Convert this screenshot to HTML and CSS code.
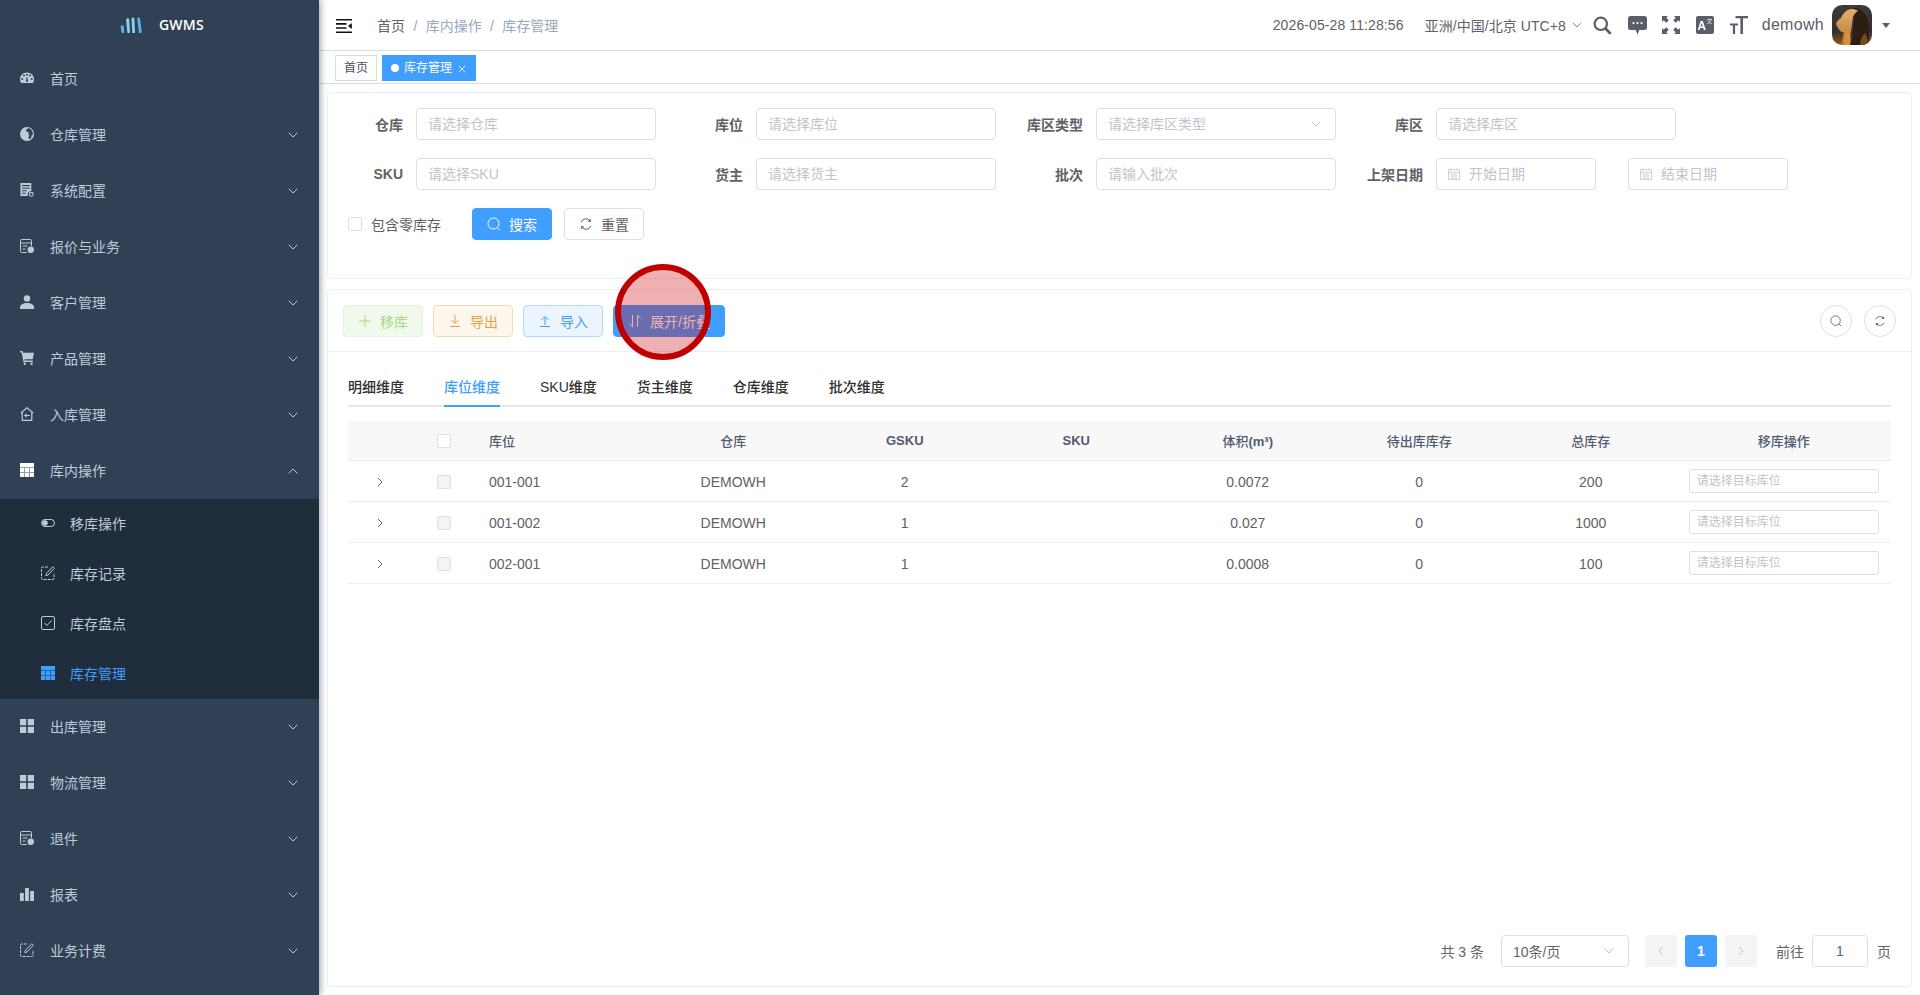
FILE: index.html
```html
<!DOCTYPE html>
<html lang="zh-CN">
  <head>
    <meta charset="UTF-8" />
    <title>库存管理 - GWMS</title>
    <link rel="stylesheet" href="styles.css">
  </head>
  <body>
    <svg class="sprite" xmlns="http://www.w3.org/2000/svg">
      <symbol id="i-chevron" viewBox="0 0 10 6"><path d="M.7.7 5 5l4.300-4.300" fill="none" stroke="currentColor" stroke-width="1"/></symbol>
      <symbol id="i-grid" viewBox="0 0 14 14"><path d="M0 0h6.200v6.200H0zM7.800 0H14v6.200H7.800zM0 7.800h6.200V14H0zM7.800 7.800H14V14H7.800z" fill="currentColor"/></symbol>
      <symbol id="i-table" viewBox="0 0 14 14"><path fill-rule="evenodd" d="M0 0h14v14H0zM0 4.500v.5h14v-.5zM0 9.200v.5h14v-.5zM4.400 5v9h.5V5zM9.100 5v9h.5V5z" fill="currentColor"/></symbol>
      <symbol id="i-doc" viewBox="0 0 14 14"><g fill="none" stroke="currentColor" stroke-width="1"><path d="M7 13.500H1.700A1.200 1.200 0 0 1 .5 12.300V1.700A1.200 1.200 0 0 1 1.700.5h8.600a1.200 1.200 0 0 1 1.200 1.200V7"/><path d="M.5 4h11M2.500 7h5M2.500 10h3"/></g><circle cx="10.800" cy="10.800" r="3.200" fill="currentColor"/></symbol>
      <symbol id="i-edit" viewBox="0 0 14 14"><g fill="none" stroke="currentColor" stroke-width="1"><path d="M7 1H1.500a1 1 0 0 0-1 1v10.500a1 1 0 0 0 1 1H12a1 1 0 0 0 1-1V7" stroke-dasharray="3 1"/><path d="M11.700.8l1.600 1.600-6.300 6.600-2.200.6.600-2.200z"/></g></symbol>
      <symbol id="i-search" viewBox="0 0 14 14"><circle cx="6.500" cy="6.500" r="5.500" fill="none" stroke="currentColor" stroke-width="1"/><path d="M10.500 10.500 13 13" stroke="currentColor" stroke-width="1"/></symbol>
      <symbol id="i-refresh" viewBox="0 0 14 14"><g fill="none" stroke="currentColor" stroke-width="1"><path d="M2.200 5.200A5 5 0 0 1 11.200 4"/><path d="M11.800 8.800A5 5 0 0 1 2.800 10"/></g><path d="M11.800 1.500v3.200H8.600zM2.200 12.500V9.300h3.200z" fill="currentColor"/></symbol>
    </svg>

    <aside class="sidebar">
      <div class="logo">
        <svg class="logo-mark" viewBox="0 0 22 16" xmlns="http://www.w3.org/2000/svg">
          <path d="M.6 9.500C1.200 7.800 3.400 7.700 3.800 9.200L4.200 14.800A1.300 1.300 0 0 1 1.600 15.200z" fill="#58b4e3"/>
          <path d="M6.100 3C6.400.9 8.800.9 9.200 2.600L9.900 14.800A1.300 1.300 0 0 1 7.300 15.100z" fill="#8fd0ef"/>
          <path d="M11.500 1.800C11.700.2 14 .2 14.300 1.700L15 14.800A1.300 1.300 0 0 1 12.300 15.200z" fill="#8fd0ef"/>
          <path d="M17.200 1.700C17.400.2 19.700.2 20 1.700L21.700 14.600A1.400 1.400 0 0 1 18.900 15.200z" fill="#58b4e3"/>
        </svg>
        <span class="logo-title">GWMS</span>
      </div>

      <div class="menu-item">
        <svg class="menu-icon" viewBox="0 0 14 14" xmlns="http://www.w3.org/2000/svg"><path fill-rule="evenodd" d="M7 1.500C3.300 1.500 0 4.300 0 8.200c0 1.600.5 2.900 1.300 3.800h11.400c.8-.9 1.300-2.200 1.300-3.800 0-3.900-3.300-6.700-7-6.700zM2.200 7a1 1 0 1 1 0 2 1 1 0 0 1 0-2zM4 3.600a1 1 0 1 1 0 2 1 1 0 0 1 0-2zM7 2.700a1 1 0 1 1 0 2 1 1 0 0 1 0-2zM10 3.600a1 1 0 1 1 0 2 1 1 0 0 1 0-2zM11.800 7a1 1 0 1 1 0 2 1 1 0 0 1 0-2zM6.600 6.200h.8l.5 3.300a1 1 0 1 1-1.800 0z" fill="currentColor"/></svg>
        <span>首页</span>
      </div>
      <div class="menu-item">
        <svg class="menu-icon" viewBox="0 0 14 14" xmlns="http://www.w3.org/2000/svg"><path fill-rule="evenodd" d="M7 0a7 7 0 1 1 0 14A7 7 0 0 1 7 0zM8.500.9 7.200 2.300 5.800 2.600 6.300 4.400 8 4.700 9 6.800 8.200 7.800 9.500 8.300 8.300 10.500 9.500 12.300 11.200 10.800 11.600 8.500 13 7.500C13 5.500 12 2 8.500.9z" fill="currentColor"/></svg>
        <span>仓库管理</span>
        <svg class="chevron"><use href="#i-chevron"/></svg>
      </div>
      <div class="menu-item">
        <svg class="menu-icon" viewBox="0 0 14 14" xmlns="http://www.w3.org/2000/svg"><path fill-rule="evenodd" d="M.5 0h10.800v8a3.600 3.600 0 0 0-3.400 5H.5zM2 2v1.200h7.800V2zM2 4.700v1h7.800v-1zM2 7.200v1h4.800v-1zM2 9.700v1h3.800v-1z" fill="currentColor"/><circle cx="11.300" cy="11.300" r="1.900" fill="none" stroke="currentColor" stroke-width="1.100"/></svg>
        <span>系统配置</span>
        <svg class="chevron"><use href="#i-chevron"/></svg>
      </div>
      <div class="menu-item">
        <svg class="menu-icon"><use href="#i-doc"/></svg>
        <span>报价与业务</span>
        <svg class="chevron"><use href="#i-chevron"/></svg>
      </div>
      <div class="menu-item">
        <svg class="menu-icon" viewBox="0 0 14 14" xmlns="http://www.w3.org/2000/svg"><circle cx="7" cy="3.400" r="3.200" fill="currentColor"/><path d="M0 12.200C0 9.500 3 7.900 7 7.900s7 1.600 7 4.300V14H0z" fill="currentColor"/></svg>
        <span>客户管理</span>
        <svg class="chevron"><use href="#i-chevron"/></svg>
      </div>
      <div class="menu-item">
        <svg class="menu-icon" viewBox="0 0 14 14" xmlns="http://www.w3.org/2000/svg"><path d="M0 0h2.600l.5 1.800H14l-1.300 6.400H4.500l.3 1.300h8V11H3.500L1.600 1.400H0z" fill="currentColor"/><circle cx="4.800" cy="12.800" r="1.200" fill="currentColor"/><circle cx="11.600" cy="12.800" r="1.200" fill="currentColor"/></svg>
        <span>产品管理</span>
        <svg class="chevron"><use href="#i-chevron"/></svg>
      </div>
      <div class="menu-item">
        <svg class="menu-icon" viewBox="0 0 14 14" xmlns="http://www.w3.org/2000/svg"><path d="M.8 6 7 .9 13.200 6M2.200 5v8.300h9.600V5" fill="none" stroke="currentColor" stroke-width="1.200"/><path d="M10 8H6.500V6.200L4 8.500l2.500 2.300V9H10z" fill="currentColor"/></svg>
        <span>入库管理</span>
        <svg class="chevron"><use href="#i-chevron"/></svg>
      </div>
      <div class="menu-item menu-open">
        <svg class="menu-icon icon-white"><use href="#i-table"/></svg>
        <span>库内操作</span>
        <svg class="chevron chevron-up"><use href="#i-chevron"/></svg>
      </div>

      <div class="submenu">
        <div class="sub-item">
          <svg class="sub-icon" viewBox="0 0 14 14" xmlns="http://www.w3.org/2000/svg"><rect x=".5" y="3.500" width="13" height="7" rx="3.500" fill="none" stroke="currentColor"/><circle cx="4" cy="7" r="2.800" fill="currentColor"/></svg>
          <span>移库操作</span>
        </div>
        <div class="sub-item">
          <svg class="sub-icon"><use href="#i-edit"/></svg>
          <span>库存记录</span>
        </div>
        <div class="sub-item">
          <svg class="sub-icon" viewBox="0 0 14 14" xmlns="http://www.w3.org/2000/svg"><rect x=".5" y=".5" width="13" height="13" rx="1.500" fill="none" stroke="currentColor"/><path d="m3.500 7 2.500 2.500 4.500-5" fill="none" stroke="currentColor"/></svg>
          <span>库存盘点</span>
        </div>
        <div class="sub-item sub-active">
          <svg class="sub-icon"><use href="#i-table"/></svg>
          <span>库存管理</span>
        </div>
      </div>

      <div class="menu-item">
        <svg class="menu-icon"><use href="#i-grid"/></svg>
        <span>出库管理</span>
        <svg class="chevron"><use href="#i-chevron"/></svg>
      </div>
      <div class="menu-item">
        <svg class="menu-icon"><use href="#i-grid"/></svg>
        <span>物流管理</span>
        <svg class="chevron"><use href="#i-chevron"/></svg>
      </div>
      <div class="menu-item">
        <svg class="menu-icon"><use href="#i-doc"/></svg>
        <span>退件</span>
        <svg class="chevron"><use href="#i-chevron"/></svg>
      </div>
      <div class="menu-item">
        <svg class="menu-icon" viewBox="0 0 14 14" xmlns="http://www.w3.org/2000/svg"><path d="M0 6h3.800v8H0zM5.100 1h3.800v13H5.100zM10.200 4H14v10h-3.800z" fill="currentColor"/></svg>
        <span>报表</span>
        <svg class="chevron"><use href="#i-chevron"/></svg>
      </div>
      <div class="menu-item">
        <svg class="menu-icon"><use href="#i-edit"/></svg>
        <span>业务计费</span>
        <svg class="chevron"><use href="#i-chevron"/></svg>
      </div>
    </aside>

    <div class="main">
      <header class="navbar">
        <svg class="hamburger" viewBox="0 0 16 14" xmlns="http://www.w3.org/2000/svg"><path d="M0 0h16v1.600H0zM0 4.100h10.500v1.600H0zM0 8.200h10.500v1.600H0zM0 12.400h16V14H0z" fill="#111"/><path d="M15.800 4v5.900L12 7z" fill="#111"/></svg>
        <nav class="breadcrumb">
          <span class="crumb-home">首页</span>
          <span class="crumb-sep">/</span>
          <span>库内操作</span>
          <span class="crumb-sep">/</span>
          <span>库存管理</span>
        </nav>

        <div class="nav-right">
          <span class="clock">2026-05-28 11:28:56</span>
          <span class="timezone">亚洲/中国/北京 UTC+8</span>
          <svg class="tz-chevron"><use href="#i-chevron"/></svg>
          <svg class="nav-icon icon-search" viewBox="0 0 19 19" xmlns="http://www.w3.org/2000/svg"><circle cx="7.800" cy="7.800" r="6.200" fill="none" stroke="#5a5e66" stroke-width="2.200"/><path d="m12.500 12.500 5.200 5.400" stroke="#5a5e66" stroke-width="2.800"/></svg>
          <svg class="nav-icon icon-chat" viewBox="0 0 19 19" xmlns="http://www.w3.org/2000/svg"><path fill-rule="evenodd" d="M2.500 0h14A2.500 2.500 0 0 1 19 2.500v9a2.500 2.500 0 0 1-2.500 2.500h-5.200l-1.800 4.500-1.800-4.500H2.500A2.500 2.500 0 0 1 0 11.500v-9A2.500 2.500 0 0 1 2.500 0zM5.500 6a1.100 1.100 0 1 0 0 2.200 1.100 1.100 0 0 0 0-2.200zM9.500 6a1.100 1.100 0 1 0 0 2.200 1.100 1.100 0 0 0 0-2.200zM13.500 6a1.100 1.100 0 1 0 0 2.200 1.100 1.100 0 0 0 0-2.200z" fill="#5a5e66"/></svg>
          <svg class="nav-icon icon-full" viewBox="0 0 18 18" xmlns="http://www.w3.org/2000/svg"><path d="M0 0h6L4.300 1.700l2.500 2.500-2.600 2.600-2.500-2.500L0 6zM18 0v6l-1.700-1.700-2.500 2.500-2.600-2.600 2.500-2.500L12 0zM18 18h-6l1.700-1.700-2.500-2.500 2.600-2.600 2.500 2.500L18 12zM0 18v-6l1.700 1.700 2.500-2.500 2.600 2.600-2.500 2.500L6 18z" fill="#5a5e66"/></svg>
          <svg class="nav-icon icon-lang" viewBox="0 0 18 18" xmlns="http://www.w3.org/2000/svg"><rect width="18" height="18" rx="2" fill="#5a5e66"/><path fill-rule="evenodd" d="M4.700 5h2.100l3 9H7.900l-.6-2H4.100l-.6 2H1.700zM5.700 7 4.600 10.500h2.200z" fill="#fff"/><path d="M11 3.500h5M13.500 2.800v.7M15 3.500c-.4 2-1.700 3.400-3.800 4.200M12 4.800c.6 1.300 1.800 2.300 3.800 2.900" fill="none" stroke="#fff" stroke-width=".7"/></svg>
          <svg class="nav-icon icon-size" viewBox="0 0 18 18" xmlns="http://www.w3.org/2000/svg"><path d="M5.500 0H18v2.300h-5V18h-2.600V2.300H5.500zM0 7.500h8v2H5.100V18H2.900V9.500H0z" fill="#5a5e66"/></svg>
          <span class="username">demowh</span>
          <svg class="avatar" viewBox="0 0 40 40" xmlns="http://www.w3.org/2000/svg">
            <defs>
              <clipPath id="avatar-clip"><rect width="40" height="40" rx="10"/></clipPath>
              <linearGradient id="face" x1="0" y1="0" x2="0" y2="1"><stop offset="0" stop-color="#e2b070"/><stop offset="1" stop-color="#b8742f"/></linearGradient>
              <linearGradient id="ground" x1="0" y1="0" x2="0" y2="1"><stop offset="0" stop-color="#3f3a34"/><stop offset=".65" stop-color="#33302b"/><stop offset="1" stop-color="#8a5a20"/></linearGradient>
            </defs>
            <g clip-path="url(#avatar-clip)">
              <rect width="40" height="40" fill="url(#ground)"/>
              <path d="M21 3c8 0 13 5 15 13 2 9 1 17 0 24H18c3-8 3-16 4-22z" fill="#2b1e14"/>
              <path d="M20 4c2 0 4 .5 6 2-2 1-4 3-5 6-1 5-1 10-2 14-1 5-2 9-3 14h-7c1-5 2-9 3-12-3-1-5-3-6-5l-2-4c1-3 3-5 5-6 2-5 6-9 11-9z" fill="url(#face)"/>
              <path d="M15 24c3 2 4 8 3 16h-6c0-6 1-11 3-16z" fill="#d9903c"/>
              <path d="M33 28c2 3 3 7 3 12h-8c0-5 2-9 5-12z" fill="#7a4a1c"/>
            </g>
          </svg>
          <span class="caret"></span>
        </div>
      </header>

      <div class="tags-view">
        <span class="tag">首页</span>
        <span class="tag tag-active"><i class="tag-dot"></i>库存管理<svg class="tag-close" viewBox="0 0 8 8" xmlns="http://www.w3.org/2000/svg"><path d="m.8.8 6.400 6.400M7.200.8.8 7.200" stroke="currentColor" stroke-width=".8"/></svg></span>
      </div>

      <div class="app-main">
        <section class="card filter-card">
          <div class="filter-grid">
            <div class="form-item">
              <label>仓库</label>
              <div class="field"><input placeholder="请选择仓库"></div>
            </div>
            <div class="form-item">
              <label>库位</label>
              <div class="field"><input placeholder="请选择库位"></div>
            </div>
            <div class="form-item">
              <label>库区类型</label>
              <div class="field"><input placeholder="请选择库区类型"><svg class="field-chevron"><use href="#i-chevron"/></svg></div>
            </div>
            <div class="form-item">
              <label>库区</label>
              <div class="field"><input placeholder="请选择库区"></div>
            </div>
            <div class="form-item">
              <label>SKU</label>
              <div class="field"><input placeholder="请选择SKU"></div>
            </div>
            <div class="form-item">
              <label>货主</label>
              <div class="field"><input placeholder="请选择货主"></div>
            </div>
            <div class="form-item">
              <label>批次</label>
              <div class="field"><input placeholder="请输入批次"></div>
            </div>
            <div class="form-item">
              <label>上架日期</label>
              <div class="date-pair">
                <div class="field field-date">
                  <svg class="date-icon" viewBox="0 0 12 12" xmlns="http://www.w3.org/2000/svg"><path d="M.5 1.500h11v10H.5zM.5 4h11M2.500 6h7M2.500 8h7M2.500 10h7M3 .5v1.500M9 .5v1.500" fill="none" stroke="currentColor" stroke-width=".8"/></svg>
                  <input placeholder="开始日期">
                </div>
                <div class="field field-date">
                  <svg class="date-icon" viewBox="0 0 12 12" xmlns="http://www.w3.org/2000/svg"><path d="M.5 1.500h11v10H.5zM.5 4h11M2.500 6h7M2.500 8h7M2.500 10h7M3 .5v1.500M9 .5v1.500" fill="none" stroke="currentColor" stroke-width=".8"/></svg>
                  <input placeholder="结束日期">
                </div>
              </div>
            </div>
          </div>
          <div class="filter-actions">
            <label class="check-label"><span class="checkbox"></span>包含零库存</label>
            <button class="btn btn-primary"><svg class="btn-icon"><use href="#i-search"/></svg>搜索</button>
            <button class="btn btn-default"><svg class="btn-icon"><use href="#i-refresh"/></svg>重置</button>
          </div>
        </section>

        <section class="card table-card">
          <div class="toolbar">
            <button class="btn btn-success-off">
              <svg class="btn-icon" viewBox="0 0 14 14" xmlns="http://www.w3.org/2000/svg"><path d="M7 1v12M1 7h12" stroke="currentColor" stroke-width="1" fill="none"/></svg>移库
            </button>
            <button class="btn btn-warning-plain">
              <svg class="btn-icon" viewBox="0 0 14 14" xmlns="http://www.w3.org/2000/svg"><path d="M7 1v8M3.500 6 7 9.500 10.500 6M2 12.500h10" stroke="currentColor" stroke-width="1" fill="none"/></svg>导出
            </button>
            <button class="btn btn-primary-plain">
              <svg class="btn-icon" viewBox="0 0 14 14" xmlns="http://www.w3.org/2000/svg"><path d="M7 11V3M3.500 6 7 2.500 10.500 6M2 12.500h10" stroke="currentColor" stroke-width="1" fill="none"/></svg>导入
            </button>
            <button class="btn btn-primary btn-wide">
              <svg class="btn-icon" viewBox="0 0 14 14" xmlns="http://www.w3.org/2000/svg"><path d="M4.500 1v12L1.500 9.500M9.500 13V1l3 3.500" stroke="currentColor" stroke-width="1" fill="none"/></svg>展开/折叠
            </button>
            <div class="toolbar-right">
              <button class="btn-circle"><svg class="btn-icon-only"><use href="#i-search"/></svg></button>
              <button class="btn-circle"><svg class="btn-icon-only"><use href="#i-refresh"/></svg></button>
            </div>
          </div>

          <div class="table-body">
            <div class="tabs">
              <span class="tab">明细维度</span>
              <span class="tab tab-active">库位维度</span>
              <span class="tab">SKU维度</span>
              <span class="tab">货主维度</span>
              <span class="tab">仓库维度</span>
              <span class="tab">批次维度</span>
            </div>

            <table class="stock-table">
              <colgroup>
                <col class="col-expand"><col class="col-check"><col class="col-data"><col class="col-data"><col class="col-data"><col class="col-data"><col class="col-data"><col class="col-data"><col class="col-data"><col>
              </colgroup>
              <thead>
                <tr>
                  <th></th>
                  <th><span class="checkbox"></span></th>
                  <th class="left">库位</th>
                  <th>仓库</th>
                  <th><b>GSKU</b></th>
                  <th><b>SKU</b></th>
                  <th>体积<b>(m³)</b></th>
                  <th>待出库库存</th>
                  <th>总库存</th>
                  <th>移库操作</th>
                </tr>
              </thead>
              <tbody>
                <tr>
                  <td><svg class="row-arrow" viewBox="0 0 6 10" xmlns="http://www.w3.org/2000/svg"><path d="m1 1 4 4-4 4" fill="none" stroke="currentColor"/></svg></td>
                  <td><span class="checkbox checkbox-off"></span></td>
                  <td class="left">001-001</td>
                  <td>DEMOWH</td>
                  <td>2</td>
                  <td></td>
                  <td>0.0072</td>
                  <td>0</td>
                  <td>200</td>
                  <td class="cell-input"><input class="row-input" placeholder="请选择目标库位"></td>
                </tr>
                <tr>
                  <td><svg class="row-arrow" viewBox="0 0 6 10" xmlns="http://www.w3.org/2000/svg"><path d="m1 1 4 4-4 4" fill="none" stroke="currentColor"/></svg></td>
                  <td><span class="checkbox checkbox-off"></span></td>
                  <td class="left">001-002</td>
                  <td>DEMOWH</td>
                  <td>1</td>
                  <td></td>
                  <td>0.027</td>
                  <td>0</td>
                  <td>1000</td>
                  <td class="cell-input"><input class="row-input" placeholder="请选择目标库位"></td>
                </tr>
                <tr>
                  <td><svg class="row-arrow" viewBox="0 0 6 10" xmlns="http://www.w3.org/2000/svg"><path d="m1 1 4 4-4 4" fill="none" stroke="currentColor"/></svg></td>
                  <td><span class="checkbox checkbox-off"></span></td>
                  <td class="left">002-001</td>
                  <td>DEMOWH</td>
                  <td>1</td>
                  <td></td>
                  <td>0.0008</td>
                  <td>0</td>
                  <td>100</td>
                  <td class="cell-input"><input class="row-input" placeholder="请选择目标库位"></td>
                </tr>
              </tbody>
            </table>

            <div class="pagination">
              <span class="total">共 3 条</span>
              <div class="field page-size"><span>10条/页</span><svg class="field-chevron"><use href="#i-chevron"/></svg></div>
              <span class="page-btn"><svg class="page-arrow" viewBox="0 0 6 10" xmlns="http://www.w3.org/2000/svg"><path d="M5 1 1 5l4 4" fill="none" stroke="currentColor"/></svg></span>
              <span class="page-btn page-current">1</span>
              <span class="page-btn"><svg class="page-arrow" viewBox="0 0 6 10" xmlns="http://www.w3.org/2000/svg"><path d="m1 1 4 4-4 4" fill="none" stroke="currentColor"/></svg></span>
              <span class="jump-label">前往</span>
              <span class="field page-jump">1</span>
              <span class="jump-unit">页</span>
            </div>
          </div>
        </section>
      </div>
    </div>

    <div class="click-marker"></div>
  </body>
</html>
```

FILE: styles.css
```css
body {
  margin: 0;
  height: 100vh;
  overflow: hidden;
  display: flex;
  font-family: "Liberation Sans", "Noto Sans CJK SC", sans-serif;
  font-size: 14px;
  color: #606266;
  background: #fff;
}
.sprite {
  display: none;
}
button,
input {
  font-family: inherit;
}
input::placeholder {
  color: #c0c4cc;
}

/* sidebar */
.sidebar {
  width: 319px;
  flex-shrink: 0;
  background: #304156;
  color: #bfcbd9;
  box-shadow: 2px 0 6px rgba(0, 21, 41, 0.35);
  position: relative;
  z-index: 2;
}
.logo {
  height: 51px;
  display: flex;
  align-items: center;
  padding-left: 120px;
  padding-bottom: 3px;
  box-sizing: border-box;
}
.logo-mark {
  width: 22px;
  height: 16px;
  margin-top: 2px;
}
.logo-title {
  margin-left: 17px;
  color: #fff;
  font-family: "Open Sans", "Liberation Sans", sans-serif;
  font-size: 14px;
  font-weight: 600;
  letter-spacing: 0.2px;
}
.menu-item {
  height: 56px;
  display: flex;
  align-items: center;
  padding-left: 20px;
}
.menu-item span,
.sub-item span {
  margin-top: -2px;
}
.menu-icon {
  width: 14px;
  height: 14px;
  margin-right: 16px;
  margin-top: -2px;
  flex-shrink: 0;
}
.icon-white {
  color: #fff;
}
.chevron {
  width: 10px;
  height: 6px;
  margin-left: auto;
  margin-right: 21px;
}
.chevron-up {
  transform: rotate(180deg);
}
.submenu {
  background: #1f2d3d;
  height: 200px;
}
.sub-item {
  height: 50px;
  display: flex;
  align-items: center;
  padding-left: 40px;
}
.sub-icon {
  width: 14px;
  height: 14px;
  margin-left: 1px;
  margin-right: 15px;
  margin-top: -2px;
}
.sub-active {
  color: #409eff;
}

/* top bar */
.main {
  flex: 1;
  min-width: 0;
  display: flex;
  flex-direction: column;
}
.navbar {
  height: 50px;
  flex-shrink: 0;
  display: flex;
  align-items: center;
  border-bottom: 1px solid #d8dce5;
  padding-left: 17px;
  padding-right: 30px;
}
.hamburger {
  width: 16px;
  height: 14px;
  margin-top: 1px;
}
.breadcrumb {
  margin-left: 25px;
  color: #97a8be;
}
.crumb-home {
  color: #606266;
}
.crumb-sep {
  margin: 0 4.5px;
  color: #97a8be;
}
.nav-right {
  margin-left: auto;
  display: flex;
  align-items: center;
}
.clock {
  margin-right: 21px;
  letter-spacing: 0.1px;
}
.timezone {
  letter-spacing: 0.05px;
}
.tz-chevron {
  width: 10px;
  height: 6px;
  margin-left: 6px;
  margin-right: 11px;
  color: #909399;
}
.nav-icon {
  flex-shrink: 0;
}
.icon-search {
  width: 19px;
  height: 19px;
  margin-right: 16px;
}
.icon-chat {
  width: 19px;
  height: 19px;
  margin-right: 15px;
}
.icon-full {
  width: 18px;
  height: 18px;
  margin-right: 16px;
}
.icon-lang {
  width: 18px;
  height: 18px;
  margin-right: 16px;
}
.icon-size {
  width: 18px;
  height: 18px;
  margin-right: 14px;
}
.username {
  font-size: 16px;
  color: #5a5e66;
  margin-right: 8px;
  letter-spacing: 0.3px;
}
.avatar {
  width: 40px;
  height: 40px;
  margin-right: 10px;
}
.caret {
  width: 0;
  height: 0;
  border-left: 4px solid transparent;
  border-right: 4px solid transparent;
  border-top: 5px solid #5a5e66;
}

/* tags */
.tags-view {
  height: 33px;
  flex-shrink: 0;
  box-sizing: border-box;
  border-bottom: 1px solid #d8dce5;
  display: flex;
  align-items: flex-start;
  gap: 5px;
  padding-top: 4px;
  padding-left: 16px;
}
.tag {
  height: 26px;
  box-sizing: border-box;
  border: 1px solid #d8dce5;
  padding: 0 8px;
  font-size: 12px;
  line-height: 24px;
  color: #495060;
  display: flex;
  align-items: center;
}
.tag-active {
  background: #409eff;
  border-color: #409eff;
  color: #fff;
  padding-right: 9px;
}
.tag-dot {
  width: 8px;
  height: 8px;
  border-radius: 50%;
  background: #fff;
  margin-right: 5px;
}
.tag-close {
  width: 8px;
  height: 8px;
  margin-left: 6px;
  margin-top: 2px;
}

/* cards */
.app-main {
  flex: 1;
  min-height: 0;
  display: flex;
  flex-direction: column;
  gap: 10px;
  padding: 8px 8px 8px 8px;
}
.card {
  border: 1px solid #ebeef5;
  border-radius: 4px;
  background: #fff;
}
.filter-card {
  padding-top: 15px;
  padding-bottom: 38px;
}
.filter-grid {
  display: grid;
  grid-template-columns: repeat(4, 340px);
  row-gap: 18px;
}
.form-item {
  display: flex;
  align-items: center;
}
.form-item label {
  width: 75px;
  margin-right: 13px;
  text-align: right;
  font-weight: 700;
  flex-shrink: 0;
}
.field {
  height: 32px;
  width: 240px;
  box-sizing: border-box;
  border: 1px solid #dcdfe6;
  border-radius: 4px;
  display: flex;
  align-items: center;
  padding: 0 14px 0 11px;
  background: #fff;
}
.field input {
  flex: 1;
  min-width: 0;
  border: 0;
  outline: 0;
  padding: 0;
  font-size: 14px;
}
.field-chevron {
  width: 10px;
  height: 6px;
  margin-left: auto;
  flex-shrink: 0;
  color: #c0c4cc;
}
.date-pair {
  display: flex;
  gap: 32px;
}
.field-date {
  width: 160px;
}
.date-icon {
  width: 12px;
  height: 12px;
  color: #c0c4cc;
  margin-right: 9px;
  flex-shrink: 0;
}
.filter-actions {
  display: flex;
  align-items: center;
  margin-top: 18px;
  padding-left: 20px;
}
.check-label {
  display: flex;
  align-items: center;
  width: 124px;
}
.check-label .checkbox {
  margin-right: 9px;
}
.checkbox {
  display: inline-block;
  width: 14px;
  height: 14px;
  box-sizing: border-box;
  border: 1px solid #dcdfe6;
  border-radius: 2px;
  background: #fff;
  vertical-align: middle;
}
.checkbox-off {
  background: #f2f4f8;
}

/* buttons */
.btn {
  height: 32px;
  width: 80px;
  box-sizing: border-box;
  border-radius: 4px;
  border: 1px solid #dcdfe6;
  background: #fff;
  color: #606266;
  font-size: 14px;
  padding: 0;
  display: flex;
  align-items: center;
  justify-content: center;
}
.btn-icon {
  width: 14px;
  height: 14px;
  margin-right: 8px;
  flex-shrink: 0;
}
.btn-primary {
  background: #409eff;
  border-color: #409eff;
  color: #fff;
}
.btn-default {
  margin-left: 12px;
}
.btn-success-off {
  background: #f0f9eb;
  border-color: #e1f3d8;
  color: #a4da89;
}
.btn-warning-plain {
  background: #fdf6ec;
  border-color: #f5dab1;
  color: #e6a23c;
}
.btn-primary-plain {
  background: #ecf5ff;
  border-color: #b3d8ff;
  color: #409eff;
}
.btn-wide {
  width: 112px;
}
.btn-circle {
  width: 32px;
  height: 32px;
  border-radius: 50%;
  border: 1px solid #dcdfe6;
  background: #fff;
  padding: 0;
  color: #606266;
  display: flex;
  align-items: center;
  justify-content: center;
}
.btn-icon-only {
  width: 12px;
  height: 12px;
}

/* table card */
.table-card {
  flex: 1;
  min-height: 0;
  display: flex;
  flex-direction: column;
}
.toolbar {
  height: 62px;
  flex-shrink: 0;
  box-sizing: border-box;
  border-bottom: 1px solid #ebeef5;
  display: flex;
  align-items: center;
  gap: 10px;
  padding: 0 15px 0 15px;
}
.toolbar-right {
  margin-left: auto;
  display: flex;
  gap: 12px;
}
.table-body {
  flex: 1;
  min-height: 0;
  display: flex;
  flex-direction: column;
  padding: 15px 20px 19px 20px;
}
.tabs {
  height: 40px;
  flex-shrink: 0;
  box-sizing: border-box;
  border-bottom: 2px solid #e4e7ed;
  display: flex;
  font-weight: 500;
  color: #303133;
}
.tab {
  height: 40px;
  line-height: 40px;
  box-sizing: border-box;
  padding: 0 20px;
}
.tab:first-child {
  padding-left: 0;
}
.tab-active {
  width: 56px;
  margin: 0 20px;
  padding: 0;
  color: #409eff;
  border-bottom: 2px solid #409eff;
}
.stock-table {
  margin-top: 14px;
  width: 100%;
  table-layout: fixed;
  border-collapse: separate;
  border-spacing: 0;
}
.col-expand {
  width: 64px;
}
.col-check {
  width: 64px;
}
.col-data {
  width: 171.5px;
}
.stock-table th {
  height: 40px;
  padding: 0;
  box-sizing: border-box;
  background: #f8f8f9;
  border-bottom: 1px solid #ebeef5;
  font-size: 13px;
  font-weight: 500;
  color: #515a6e;
  text-align: center;
}
.stock-table td {
  height: 41px;
  padding: 2px 0 0;
  box-sizing: border-box;
  border-bottom: 1px solid #ebeef5;
  text-align: center;
}
.stock-table .left {
  text-align: left;
  padding-left: 13px;
}
.stock-table td.cell-input {
  padding-top: 0;
}
.row-arrow {
  width: 6px;
  height: 10px;
  color: #606266;
  margin-top: -3px;
  vertical-align: middle;
}
.stock-table td .checkbox {
  margin-top: -3px;
}
.row-input {
  display: block;
  width: 190px;
  height: 24px;
  margin: 0 auto;
  padding: 0 7px;
  box-sizing: border-box;
  border: 1px solid #dcdfe6;
  border-radius: 3px;
  outline: 0;
  font-size: 12px;
}

/* pagination */
.pagination {
  margin-top: auto;
  display: flex;
  align-items: center;
  justify-content: flex-end;
}
.total {
  margin-right: 17px;
}
.page-size {
  width: 128px;
  margin-right: 16px;
}
.page-btn {
  width: 32px;
  height: 32px;
  border-radius: 3px;
  background: #f4f4f5;
  color: #c0c4cc;
  margin-right: 8px;
  display: flex;
  align-items: center;
  justify-content: center;
}
.page-current {
  background: #409eff;
  color: #fff;
  font-weight: 700;
}
.page-arrow {
  width: 6px;
  height: 10px;
}
.jump-label {
  margin-left: 11px;
  margin-right: 8px;
}
.page-jump {
  width: 56px;
  padding: 0;
  justify-content: center;
}
.jump-unit {
  margin-left: 9px;
}

/* red circle drawn over the page by the recorder */
.click-marker {
  position: absolute;
  left: 615px;
  top: 264px;
  width: 96px;
  height: 96px;
  box-sizing: border-box;
  border: 6px solid #c00000;
  border-radius: 50%;
  background: rgba(200, 0, 0, 0.31);
  z-index: 5;
}
```
